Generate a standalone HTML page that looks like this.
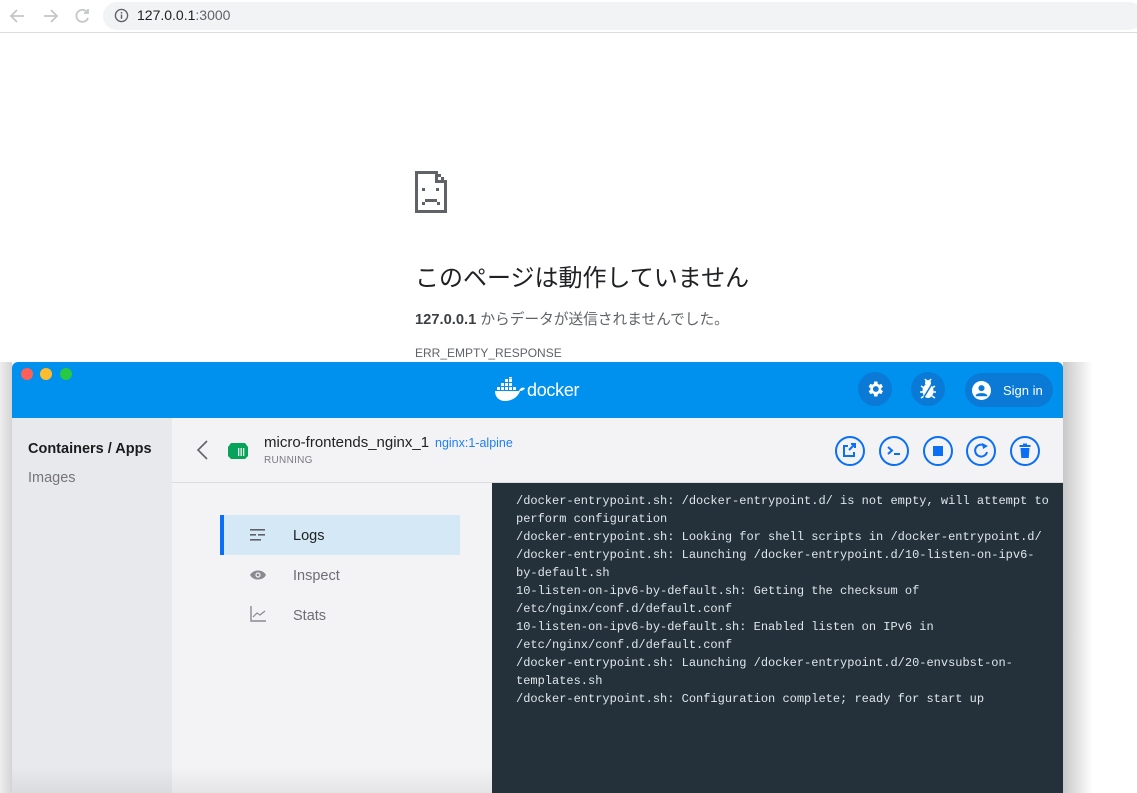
<!DOCTYPE html>
<html><head><meta charset="utf-8"><style>
*{margin:0;padding:0;box-sizing:border-box}
body{width:1137px;height:793px;overflow:hidden;background:#fff;font-family:"Liberation Sans","Noto Sans CJK JP",sans-serif;position:relative}
.abs{position:absolute}
.mono{font-family:"Liberation Mono",monospace}
</style></head><body>
<div class="abs" style="left:0;top:0;width:1137px;height:33px;background:#fff;border-bottom:1px solid #dadce0"></div>
<svg class="abs" style="left:8px;top:6px" width="90" height="20" viewBox="0 0 90 20">
<g fill="none" stroke="#c4c6c9" stroke-width="1.8">
<path d="M16 10H3M9 4L3 10l6 6"/>
<path d="M36 10h13M43 4l6 6-6 6"/>
<path d="M79 6a6 6 0 1 0 1 6"/><path d="M80 3v4h-4" />
</g></svg>
<div class="abs" style="left:103px;top:2px;width:1040px;height:28px;background:#f1f3f4;border-radius:14px"></div>
<svg class="abs" style="left:114px;top:8px" width="15" height="15" viewBox="0 0 16 16"><circle cx="8" cy="8" r="6.5" fill="none" stroke="#5f6368" stroke-width="1.5"/><rect x="7.2" y="7" width="1.6" height="4.5" fill="#5f6368"/><rect x="7.2" y="4.3" width="1.6" height="1.6" fill="#5f6368"/></svg>
<div class="abs" style="left:137px;top:7px;font-size:14px;color:#202124">127.0.0.1<span style="color:#5f6368">:3000</span></div>

<svg class="abs" style="left:414px;top:170px" width="36" height="44" viewBox="0 0 36 44">
<g fill="#5f6368"><rect x="1" y="1" width="21" height="3"/><rect x="1" y="1" width="3" height="42"/><rect x="1" y="40" width="32" height="3"/><rect x="30" y="12" width="3" height="31"/><rect x="21" y="1" width="3" height="12"/><rect x="21" y="10" width="12" height="3"/><rect x="24" y="4" width="3" height="3"/><rect x="27" y="7" width="3" height="3"/>
<rect x="8" y="18" width="3" height="3"/><rect x="22" y="18" width="3" height="3"/><rect x="11" y="29" width="12" height="3"/><rect x="8" y="32" width="3" height="3"/><rect x="23" y="32" width="3" height="3"/></g></svg>
<div class="abs" style="left:415px;top:258px;font-size:24px;color:#202124;white-space:nowrap">このページは動作していません</div>
<div class="abs" style="left:415px;top:308px;font-size:14.7px;color:#5f6368;white-space:nowrap"><b style="color:#3c4043">127.0.0.1</b> からデータが送信されませんでした。</div>
<div class="abs" style="left:415px;top:346px;font-size:12px;color:#5f6368">ERR_EMPTY_RESPONSE</div>

<div class="abs" style="left:0;top:362px;width:12px;height:431px;background:linear-gradient(90deg,#eee,#d4d4d4)"></div>
<div class="abs" style="left:1063px;top:362px;width:74px;height:431px;background:linear-gradient(90deg,#c8c8c8,#fff 40%)"></div>

<div class="abs" style="left:12px;top:362px;width:1051px;height:431px;background:#f3f3f6;border-radius:6px 6px 0 0;overflow:hidden">
 <div class="abs" style="left:0;top:0;width:1051px;height:56px;background:#0091ee"></div>
 <div class="abs" style="left:9px;top:6px;width:12px;height:12px;border-radius:50%;background:#fe5f57"></div>
 <div class="abs" style="left:28px;top:6px;width:12px;height:12px;border-radius:50%;background:#febc2e"></div>
 <div class="abs" style="left:48px;top:6px;width:12px;height:12px;border-radius:50%;background:#28c840"></div>
 <svg class="abs" style="left:482px;top:15px" width="32" height="26" viewBox="0 0 32 26"><g fill="#fff">
 <rect x="7" y="6" width="3" height="3"/><rect x="11" y="6" width="3" height="3"/><rect x="15" y="6" width="3" height="3"/><rect x="11" y="2" width="3" height="3"/><rect x="15" y="2" width="3" height="3"/><rect x="15" y="-1" width="3" height="2.5"/>
 <rect x="3" y="10" width="3" height="3"/><rect x="7" y="10" width="3" height="3"/><rect x="11" y="10" width="3" height="3"/><rect x="15" y="10" width="3" height="3"/><rect x="19" y="10" width="3" height="3"/>
 <path d="M1 14h24c1-3 3-4 6-3-1 2-3 3-5 3-2 6-8 10-15 10C5 24 1 20 1 14z"/></g></svg>
 <div class="abs" style="left:515px;top:18px;font-size:18px;color:#fff;letter-spacing:-0.3px">docker</div>
 <div class="abs" style="left:846px;top:10px;width:34px;height:34px;border-radius:50%;background:#0a7ad6"></div>
 <svg class="abs" style="left:853px;top:17px" width="20" height="20" viewBox="0 0 24 24"><path fill="#fff" d="M19.4 13a7.7 7.7 0 0 0 0-2l2.1-1.6-2-3.5-2.5 1a7 7 0 0 0-1.7-1L15 3h-4l-.4 2.9a7 7 0 0 0-1.7 1l-2.5-1-2 3.5L6.5 11a7.7 7.7 0 0 0 0 2l-2.1 1.6 2 3.5 2.5-1a7 7 0 0 0 1.7 1L11 21h4l.4-2.9a7 7 0 0 0 1.7-1l2.5 1 2-3.5zM13 15.5a3.5 3.5 0 1 1 0-7 3.5 3.5 0 0 1 0 7z"/></svg>
 <div class="abs" style="left:899px;top:10px;width:34px;height:34px;border-radius:50%;background:#0a7ad6"></div>
 <svg class="abs" style="left:906px;top:16px" width="20" height="22" viewBox="0 0 20 22"><g fill="#fff"><ellipse cx="10" cy="13" rx="5.5" ry="7"/><circle cx="10" cy="5" r="3"/></g><g stroke="#fff" stroke-width="1.5"><path d="M3 8l3 2M17 8l-3 2M2 14h3M18 14h-3M3 20l3-2M17 20l-3-2M7 1l1.5 2M13 1l-1.5 2"/><path d="M14 6L6 19" stroke="#0a7ad6" stroke-width="1.5"/></g></svg>
 <div class="abs" style="left:953px;top:11px;width:88px;height:34px;border-radius:17px;background:#0a7ad6"></div>
 <svg class="abs" style="left:960px;top:19px" width="19" height="19" viewBox="0 0 20 20"><circle cx="10" cy="10" r="10" fill="#fff"/><circle cx="10" cy="7.5" r="3.2" fill="#0a7ad6"/><path d="M4 15c1-3 11-3 12 0v1H4z" fill="#0a7ad6"/></svg>
 <div class="abs" style="left:991px;top:21px;font-size:13px;color:#fff">Sign in</div>

 <div class="abs" style="left:0;top:56px;width:160px;height:375px;background:#e8e9ed"></div>
 <div class="abs" style="left:16px;top:79px;font-size:14.5px;font-weight:bold;color:#1b1b1b">Containers / Apps</div>
 <div class="abs" style="left:16px;top:108px;font-size:14.5px;color:#75757b">Images</div>

 <div class="abs" style="left:160px;top:120px;width:891px;height:1px;background:#dcdce0"></div>
 <svg class="abs" style="left:183px;top:77px" width="14" height="22" viewBox="0 0 14 22"><path d="M12 2L3 11l9 9" fill="none" stroke="#616167" stroke-width="1.6"/></svg>
 <svg class="abs" style="left:215px;top:80px" width="22" height="18" viewBox="0 0 22 18"><path fill="#07a35a" d="M4 1h14l3 4v9l-3 3H4l-3-3V5z"/><g fill="#e6f7ee"><rect x="11" y="6" width="1.3" height="8"/><rect x="13.5" y="6" width="1.3" height="8"/><rect x="16" y="6" width="1.3" height="8"/></g></svg>
 <div class="abs" style="left:252px;top:72px;font-size:15px;color:#222">micro-frontends_nginx_1</div>
 <div class="abs" style="left:423px;top:74px;font-size:12.5px;color:#1f7ff3">nginx:1-alpine</div>
 <div class="abs" style="left:252px;top:93px;font-size:10px;color:#7a7a80;letter-spacing:0.3px">RUNNING</div>

 <svg class="abs" style="left:820px;top:73px" width="212" height="32" viewBox="0 0 212 32"><g fill="none" stroke="#0a6ff5" stroke-width="2">
 <circle cx="18" cy="16" r="14"/><circle cx="62" cy="16" r="14"/><circle cx="106" cy="16" r="14"/><circle cx="149" cy="16" r="14"/><circle cx="193" cy="16" r="14"/>
 <path d="M16 11h-4v10h10v-4M17 15l6-6M19 9h4v4"/>
 <path d="M56 12l4 3.5-4 3.5M62 19h6"/>
 <path d="M154 12a6 6 0 1 0 1 5"/></g>
 <g fill="#0a6ff5"><rect x="101" y="11" width="10" height="10"/><path d="M150 8l6 3-5 3z"/>
 <rect x="187.5" y="10" width="11" height="2"/><rect x="191" y="8.5" width="4" height="2"/><path d="M188.5 13h9l-.8 10h-7.4z"/></g></svg>

 <div class="abs" style="left:208px;top:153px;width:240px;height:40px;background:#d4e8f6;border-left:4px solid #0a6ff5"></div>
 <svg class="abs" style="left:238px;top:166px" width="16" height="14" viewBox="0 0 16 14"><g fill="#606068"><rect x="0" y="1" width="15" height="1.6"/><rect x="0" y="6" width="6" height="1.6"/><rect x="8" y="6" width="7" height="1.6"/><rect x="0" y="11" width="11" height="1.6"/></g></svg>
 <div class="abs" style="left:281px;top:166px;font-size:14.5px;color:#222">Logs</div>
 <svg class="abs" style="left:238px;top:207px" width="16" height="12" viewBox="0 0 16 12"><path d="M0 6c3-6 13-6 16 0-3 6-13 6-16 0z" fill="#8a8a90"/><circle cx="8" cy="6" r="2.6" fill="#f3f3f6"/><circle cx="8" cy="6" r="1.4" fill="#8a8a90"/></svg>
 <div class="abs" style="left:281px;top:206px;font-size:14.5px;color:#6e6e74">Inspect</div>
 <svg class="abs" style="left:238px;top:244px" width="16" height="16" viewBox="0 0 16 16"><path d="M1 0v15h15" fill="none" stroke="#8a8a90" stroke-width="1.4"/><path d="M3 11l4-4 3 2 5-4" fill="none" stroke="#8a8a90" stroke-width="1.2"/></svg>
 <div class="abs" style="left:281px;top:246px;font-size:14.5px;color:#6e6e74">Stats</div>

 <div class="abs mono" style="left:480px;top:121px;width:571px;height:310px;background:#24313a;color:#dfe6ea;font-size:12px;line-height:18px;padding:9px 0 0 24px;white-space:pre">/docker-entrypoint.sh: /docker-entrypoint.d/ is not empty, will attempt to
perform configuration
/docker-entrypoint.sh: Looking for shell scripts in /docker-entrypoint.d/
/docker-entrypoint.sh: Launching /docker-entrypoint.d/10-listen-on-ipv6-
by-default.sh
10-listen-on-ipv6-by-default.sh: Getting the checksum of
/etc/nginx/conf.d/default.conf
10-listen-on-ipv6-by-default.sh: Enabled listen on IPv6 in
/etc/nginx/conf.d/default.conf
/docker-entrypoint.sh: Launching /docker-entrypoint.d/20-envsubst-on-
templates.sh
/docker-entrypoint.sh: Configuration complete; ready for start up</div>
 <div class="abs" style="left:0;top:405px;width:480px;height:26px;background:linear-gradient(180deg,rgba(0,0,0,0),rgba(0,0,0,0.06))"></div>
</div>
</body></html>
